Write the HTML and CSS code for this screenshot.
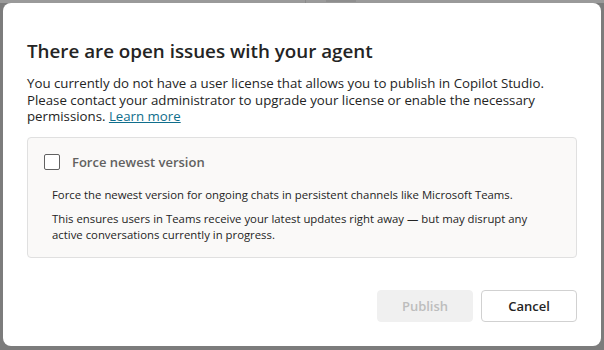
FILE: index.html
```html
<!DOCTYPE html>
<html lang="en">
<head>
<meta charset="utf-8">
<title>Publish</title>
<link rel="stylesheet" href="styles.css">
</head>
<body>
<div class="backdrop">
  <div class="behind"><span class="behind-sep"></span><span class="behind-btn"></span></div>
  <div class="dialog" role="dialog">
    <h2 class="title">There are open issues with your agent</h2>
    <p class="message">You currently do not have a user license that allows you to publish in Copilot Studio.<br>Please contact your administrator to upgrade your license or enable the necessary<br>permissions. <a class="link" href="#">Learn more</a></p>
    <div class="panel">
      <label class="check-row">
        <span class="checkbox"></span>
        <span class="check-label">Force newest version</span>
      </label>
      <p class="desc">Force the newest version for ongoing chats in persistent channels like Microsoft Teams.</p>
      <p class="desc">This ensures users in Teams receive your latest updates right away — but may disrupt any<br>active conversations currently in progress.</p>
    </div>
    <div class="actions">
      <button class="btn btn-disabled" disabled>Publish</button>
      <button class="btn">Cancel</button>
    </div>
  </div>
</div>
</body>
</html>
```

FILE: styles.css
```css
html, body {
  margin: 0;
  padding: 0;
}
body {
  width: 604px;
  height: 350px;
  overflow: hidden;
  background: #7c7c7c;
  font-family: "Open Sans", "Noto Sans", sans-serif;
  color: #242424;
}
.backdrop {
  position: relative;
  width: 604px;
  height: 350px;
  padding-top: 3px;
  box-sizing: border-box;
  background: linear-gradient(#9a9a9a 0, #9a9a9a 3px, #7c7c7c 3px);
}
.behind {
  position: absolute;
  top: 0;
  left: 305px;
  height: 3px;
  display: flex;
  gap: 20px;
}
.behind-sep {
  width: 1px;
  height: 3px;
  background: #8a8a8a;
}
.behind-btn {
  width: 30px;
  height: 2px;
  background: #8e8e8e;
}
.dialog {
  margin-left: 3px;
  width: 598px;
  height: 343px;
  box-sizing: border-box;
  background: #ffffff;
  border-radius: 8px;
  padding: 35px 24px 24px 24px;
  display: flex;
  flex-direction: column;
}
.title {
  margin: 0;
  font-size: 18.8px;
  line-height: 26px;
  font-weight: 600;
  color: #242424;
}
.message {
  margin: 11px 0 0 0;
  font-size: 13.25px;
  line-height: 16.5px;
  color: #242424;
}
.link {
  color: #0f6e8c;
  text-decoration: underline;
}
.panel {
  margin-top: 12px;
  border: 1px solid #e0e0e0;
  border-radius: 4px;
  background: #faf9f8;
  padding: 16px 24px 14px 24px;
}
.check-row {
  display: flex;
  align-items: center;
  gap: 12px;
  margin-left: -8px;
  height: 16px;
}
.checkbox {
  width: 16px;
  height: 16px;
  box-sizing: border-box;
  border: 1px solid #616161;
  border-radius: 2px;
  background: #ffffff;
}
.check-label {
  font-size: 13px;
  font-weight: 600;
  color: #616161;
}
.desc {
  margin: 0;
  font-size: 11.35px;
  line-height: 16px;
  color: #242424;
}
.check-row + .desc {
  margin-top: 17px;
}
.desc + .desc {
  margin-top: 8px;
}
.actions {
  margin-top: auto;
  display: flex;
  justify-content: flex-end;
  gap: 8px;
}
.btn {
  width: 96px;
  height: 32px;
  box-sizing: border-box;
  border: 1px solid #d1d1d1;
  border-radius: 4px;
  background: #ffffff;
  font-family: "Open Sans", "Noto Sans", sans-serif;
  font-size: 13px;
  font-weight: 600;
  color: #242424;
}
.btn-disabled {
  background: #f0f0f0;
  border-color: #f0f0f0;
  color: #bdbdbd;
}
```
